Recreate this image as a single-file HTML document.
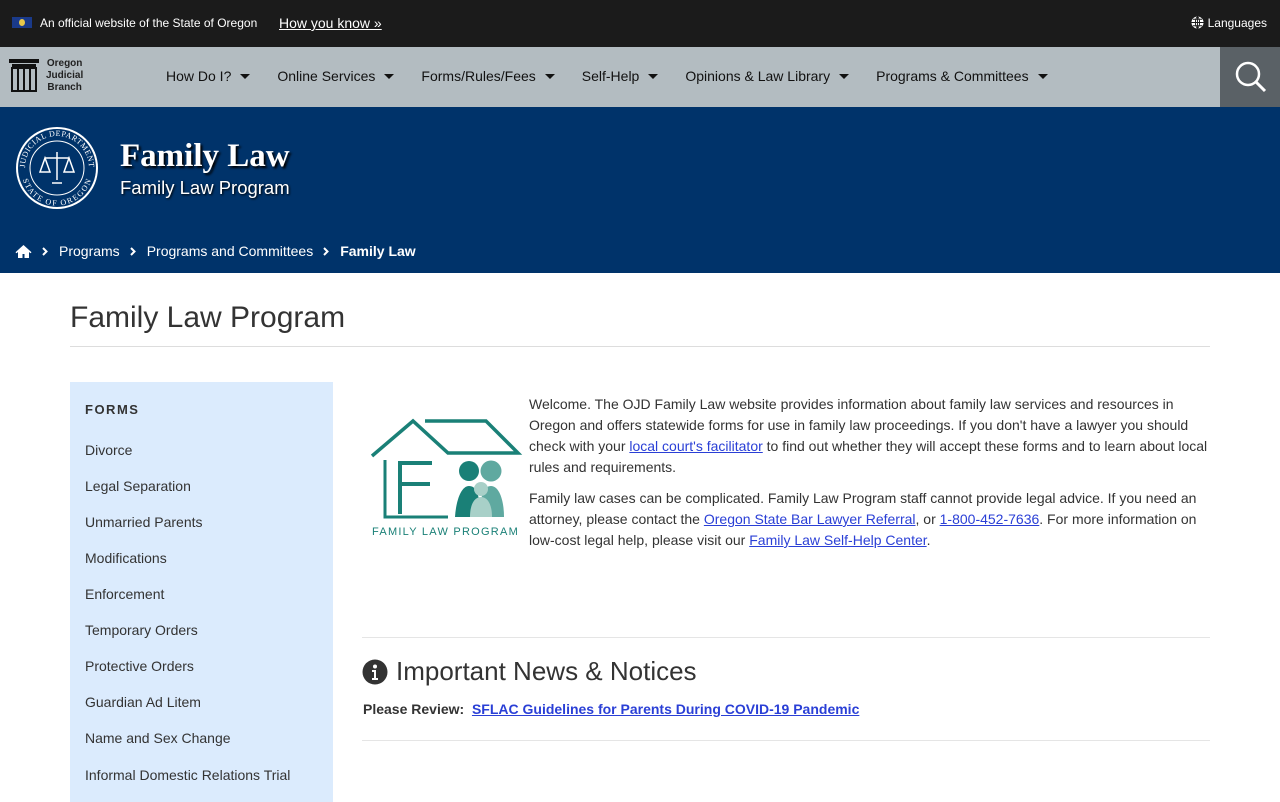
<!DOCTYPE html>
<html><head><meta charset="utf-8"><style>
*{box-sizing:border-box;margin:0;padding:0}
body{width:1280px;height:800px;overflow:hidden;font-family:"Liberation Sans",Arial,sans-serif;background:#fff;color:#333}
a{color:#2a3fd6;text-decoration:underline}
.top{height:47px;background:#1b1b1b;color:#fff;position:relative;font-size:12px}
.top .flag{position:absolute;left:12px;top:17px;width:20px;height:11px;background:#1a3a8a}
.top .flag i{position:absolute;left:7px;top:2px;width:6px;height:7px;background:#e8c84a;border-radius:50%}
.top .t1{position:absolute;left:40px;top:16px}
.top .t2{position:absolute;left:279px;top:15px;font-size:14px;color:#fff;text-decoration:underline}
.top .lang{position:absolute;right:13px;top:16px}
.nav{height:60px;background:#b3bcc1;position:relative}
.nav .logo{position:absolute;left:9px;top:12px}
.nav .ltxt{position:absolute;left:46px;top:11px;font-size:10px;font-weight:bold;line-height:12px;text-align:center;color:#222}
.nav ul{position:absolute;left:166px;top:21px;list-style:none;display:flex;font-size:14px;color:#111}
.nav li{margin-right:27px;white-space:nowrap}
.nav li:after{content:"";display:inline-block;margin-left:9px;border-left:5px solid transparent;border-right:5px solid transparent;border-top:5px solid #111;vertical-align:2px}
.nav .srch{position:absolute;right:0;top:0;width:60px;height:60px;background:#5a6166}
.hero{height:166px;background:#00336a;position:relative;color:#fff}
.hero h1{position:absolute;left:120px;top:31px;font-family:"Liberation Serif",serif;font-size:33px;font-weight:bold;text-shadow:2px 2px 2px #000}
.hero h2{position:absolute;left:120px;top:70px;font-size:18.5px;font-weight:normal;text-shadow:1px 1px 2px #000}
.bc{position:absolute;left:15px;top:136px;font-size:14px;display:flex;align-items:center}
.bc svg.s{margin:0 11px 0 10px}
.ptitle{position:absolute;left:70px;top:301px;font-size:30px;color:#333}
.hr1{position:absolute;left:70px;top:346px;width:1140px;height:1px;background:#ddd}
.side{position:absolute;left:70px;top:382px;width:263px;height:420px;background:#dbebfd}
.side h3{position:absolute;left:15px;top:20px;font-size:13px;letter-spacing:1.5px;color:#333}
.side div{position:absolute;left:15px;font-size:14px;color:#333}
.main{position:absolute;left:529px;top:394px;width:685px;font-size:14px;line-height:21px;color:#333}
.main p{margin-bottom:10px}
.hr2{position:absolute;left:362px;top:637px;width:848px;height:1px;background:#e5e5e5}
.hr3{position:absolute;left:362px;top:740px;width:848px;height:1px;background:#e5e5e5}
.news{position:absolute;left:362px;top:656px;font-size:26px;color:#333;display:flex;align-items:center}
.rev{position:absolute;left:363px;top:701px;font-size:14px;font-weight:bold}
</style></head><body>
<div class="top"><div class="flag"><i></i></div><span class="t1">An official website of the State of Oregon</span><a class="t2">How you know »</a>
<span class="lang"><svg width="13" height="13" viewBox="0 0 14 14" style="vertical-align:-2px;margin-right:4px"><circle cx="7" cy="7" r="6.5" fill="#fff"/><path d="M0.5 7h13M7 .5v13M2 3.5h10M2 10.5h10M7 .5c-3 3-3 10 0 13M7 .5c3 3 3 10 0 13" stroke="#1b1b1b" stroke-width="1" fill="none"/></svg>Languages</span></div>
<div class="nav">
<svg class="logo" width="30" height="34" viewBox="0 0 30 34"><rect x="0" y="0" width="30" height="4" fill="#111"/><rect x="3" y="5" width="24" height="3" fill="#111"/><rect x="3" y="9" width="24" height="23" fill="none" stroke="#111" stroke-width="2"/><path d="M9 9v23M15 9v23M21 9v23" stroke="#111" stroke-width="2"/></svg>
<div class="ltxt">Oregon<br>Judicial<br>Branch</div>
<ul><li>How Do I?</li><li>Online Services</li><li>Forms/Rules/Fees</li><li>Self-Help</li><li>Opinions &amp; Law Library</li><li>Programs &amp; Committees</li></ul>
<div class="srch"><svg width="60" height="60" viewBox="0 0 60 60"><circle cx="28" cy="27" r="11" fill="none" stroke="#fff" stroke-width="2.5"/><path d="M36 35l9 9" stroke="#fff" stroke-width="3"/></svg></div>
</div>
<div class="hero">
<svg style="position:absolute;left:15px;top:19px" width="84" height="84" viewBox="0 0 84 84"><circle cx="42" cy="42" r="41" fill="#fff"/><circle cx="42" cy="42" r="39" fill="#00336a"/><circle cx="42" cy="42" r="27" fill="none" stroke="#fff" stroke-width="1"/><path d="M42 26v28M30 32h24M30 32l-5 14h10zM54 32l-5 14h10zM37 57h10" stroke="#fff" stroke-width="1.5" fill="none"/><path id="ta" d="M10 42a32 32 0 0 1 64 0" fill="none"/><path id="tb" d="M12 44a30 30 0 0 0 60 0" fill="none"/><text font-size="8" fill="#fff" font-family="Liberation Serif" letter-spacing="0.5"><textPath href="#ta" startOffset="50%" text-anchor="middle">JUDICIAL DEPARTMENT</textPath></text><text font-size="8" fill="#fff" font-family="Liberation Serif" letter-spacing="0.5"><textPath href="#tb" startOffset="50%" text-anchor="middle" dominant-baseline="hanging">STATE OF OREGON</textPath></text></svg>
<h1>Family Law</h1><h2>Family Law Program</h2>
<div class="bc"><svg width="17" height="15" viewBox="0 0 17 15"><path d="M8.5 1L0.5 8.3l1 1 1.5-1.3V14h4.5v-4h2v4H14V8l1.5 1.3 1-1z" fill="#fff"/></svg><svg class="s" width="6" height="9" viewBox="0 0 6 9"><path d="M1 1l3.5 3.5L1 8" stroke="#fff" stroke-width="2" fill="none"/></svg>Programs<svg class="s" width="6" height="9" viewBox="0 0 6 9"><path d="M1 1l3.5 3.5L1 8" stroke="#fff" stroke-width="2" fill="none"/></svg>Programs and Committees<svg class="s" width="6" height="9" viewBox="0 0 6 9"><path d="M1 1l3.5 3.5L1 8" stroke="#fff" stroke-width="2" fill="none"/></svg><b>Family Law</b></div>
</div>
<div class="ptitle">Family Law Program</div><div class="hr1"></div>
<div class="side"><h3>FORMS</h3>
<div style="top:60px">Divorce</div><div style="top:96px">Legal Separation</div><div style="top:132px">Unmarried Parents</div><div style="top:168px">Modifications</div><div style="top:204px">Enforcement</div><div style="top:240px">Temporary Orders</div><div style="top:276px">Protective Orders</div><div style="top:312px">Guardian Ad Litem</div><div style="top:348px">Name and Sex Change</div><div style="top:385px">Informal Domestic Relations Trial</div></div>
<svg style="position:absolute;left:360px;top:410px" width="170" height="135" viewBox="360 410 170 135"><path d="M372 456L413 421L448 453H518L486 421H425" stroke="#1a8077" stroke-width="3.5" fill="none" stroke-linejoin="miter"/><path d="M385 460v57h63" stroke="#1a8077" stroke-width="3" fill="none"/><path d="M400 461v53M400 463h32M400 484h30" stroke="#1a8077" stroke-width="4" fill="none"/><circle cx="469" cy="471" r="10" fill="#1a8077"/><circle cx="491" cy="471" r="10.5" fill="#5fa9a0"/><path d="M455 517c1-16 6-31 14-31s11 10 11 31z" fill="#1a8077"/><path d="M480 517c0-20 3-31 11-31s13 14 13 31z" fill="#5fa9a0"/><circle cx="481" cy="489" r="7" fill="#a8d0c8"/><path d="M470 517c0-12 4-20 11-20s11 8 11 20z" fill="#a8d0c8"/><text x="372" y="535" font-size="11" letter-spacing="1.25" fill="#1a8077" font-family="Liberation Sans">FAMILY LAW PROGRAM</text></svg>
<div class="main"><p>Welcome. The OJD Family Law website provides information about family law services and resources in Oregon and offers statewide forms for use in family law proceedings. If you don't have a lawyer you should check with your <a>local court's facilitator</a> to find out whether they will accept these forms and to learn about local rules and requirements.</p>
<p>Family law cases can be complicated. Family Law Program staff cannot provide legal advice. If you need an attorney, please contact the <a>Oregon State Bar Lawyer Referral</a>, or <a>1-800-452-7636</a>. For more information on low-cost legal help, please visit our <a>Family Law Self-Help Center</a>.</p></div>
<div class="hr2"></div>
<div class="news"><svg width="26" height="26" viewBox="0 0 26 26" style="margin-right:8px"><circle cx="13" cy="13" r="12.5" fill="#333"/><circle cx="13" cy="7.5" r="2" fill="#fff"/><path d="M10 11h4v8h2v2h-6v-2h2v-6h-2z" fill="#fff"/></svg>Important News &amp; Notices</div>
<div class="rev">Please Review:&nbsp; <a>SFLAC Guidelines for Parents During COVID-19 Pandemic</a></div>
<div class="hr3"></div>
</body></html>
